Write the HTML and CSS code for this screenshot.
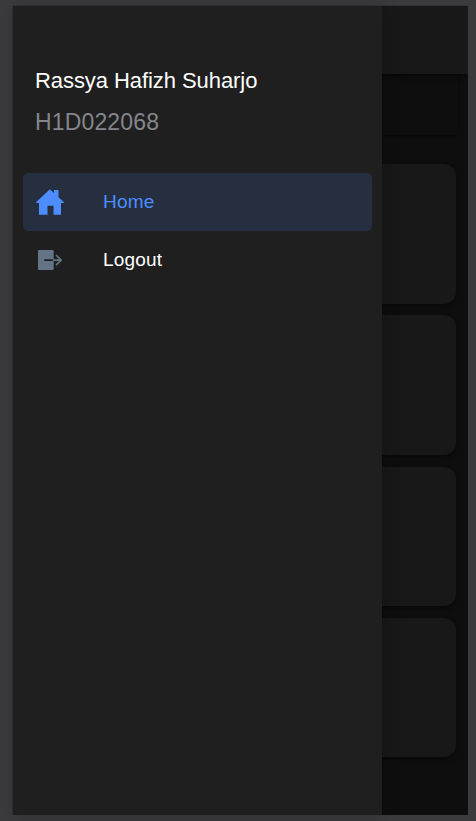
FILE: index.html
```html
<!DOCTYPE html>
<html lang="en">
<head>
<meta charset="utf-8">
<title>Menu</title>
<link rel="stylesheet" href="styles.css">
</head>
<body>
<div class="device">
  <main class="page">
    <header class="toolbar"></header>
    <div class="summary"></div>
    <section class="cards">
      <div class="card"></div>
      <div class="card"></div>
      <div class="card"></div>
      <div class="card"></div>
    </section>
  </main>
  <aside class="menu">
    <h1 class="name">Rassya Hafizh Suharjo</h1>
    <p class="student-id">H1D022068</p>
    <nav class="nav">
      <a class="item selected">
        <svg class="icon" viewBox="0 0 30 30"><path d="M1 15.200 14.900 2.200 19 6V3h4.500v7.200L29 15.200l-.5.8H26v11.800h-7.500V18.700h-6v9.100H4V16H1.500z"/></svg>
        <span>Home</span>
      </a>
      <a class="item">
        <svg class="icon" viewBox="0 0 30 30"><path d="M4 5h13.700a1 1 0 0 1 1 1v8.300h-8.900a.8.8 0 0 0 0 1.600h8.900V24a1 1 0 0 1-1 1H4a1 1 0 0 1-1-1V6a1 1 0 0 1 1-1z"/><path class="arrow" d="M18.500 15.100h7.500M21.500 10.500l4.700 4.600-4.700 4.600"/></svg>
        <span>Logout</span>
      </a>
    </nav>
  </aside>
</div>
</body>
</html>
```
FILE: styles.css
```css
* { box-sizing: border-box; }
body {
  margin: 0;
  height: 821px;
  padding: 6px 8px 6px 13px;
  background: #3b3b3e;
  font-family: "Liberation Sans", Arial, sans-serif;
  overflow: hidden;
}
.device {
  position: relative;
  height: 809px;
  background: #0e0e0e;
  box-shadow: -1px -1px 0 #333335;
}
.page { height: 100%; overflow: hidden; }
.toolbar {
  height: 68px;
  background: #181818;
  box-shadow: 0 2px 5px #080808;
}
.summary {
  height: 61px;
  margin-right: 10px;
  border-radius: 0 0 4px 4px;
  box-shadow: 0 1px 2px #0a0a0a;
}
.cards {
  display: grid;
  grid-auto-rows: 139.500px;
  gap: 11.800px;
  padding: 29px 12px 0;
}
.card {
  border-radius: 12px;
  background: #181818;
  box-shadow: 0 2px 4px #090909;
}
.menu {
  position: absolute;
  inset: 0 auto 0 0;
  width: 369px;
  padding: 61px 10px 0;
  background: #1f1f1f;
  box-shadow: 0 0 18px rgba(0, 0, 0, .18);
}
.name, .student-id {
  margin: 0 0 0 12px;
  font-weight: 400;
  white-space: nowrap;
}
.name { font-size: 22px; line-height: 28px; letter-spacing: -.07px; color: #fff; }
.student-id { margin-top: 13px; font-size: 23px; line-height: 28px; letter-spacing: .15px; color: #84868b; }
.nav { margin-top: 37px; }
.item {
  display: flex;
  align-items: center;
  gap: 38px;
  height: 58px;
  padding-left: 12px;
  border-radius: 5px;
  color: #fff;
  font-size: 19px;
  letter-spacing: .2px;
}
.icon { width: 30px; height: 30px; fill: #647487; }
.arrow { fill: none; stroke: #647487; stroke-width: 1.700; stroke-linecap: round; stroke-linejoin: round; }
.selected { background: #262f40; color: #4d8dff; }
.selected .icon { fill: #4d8dff; }
```
